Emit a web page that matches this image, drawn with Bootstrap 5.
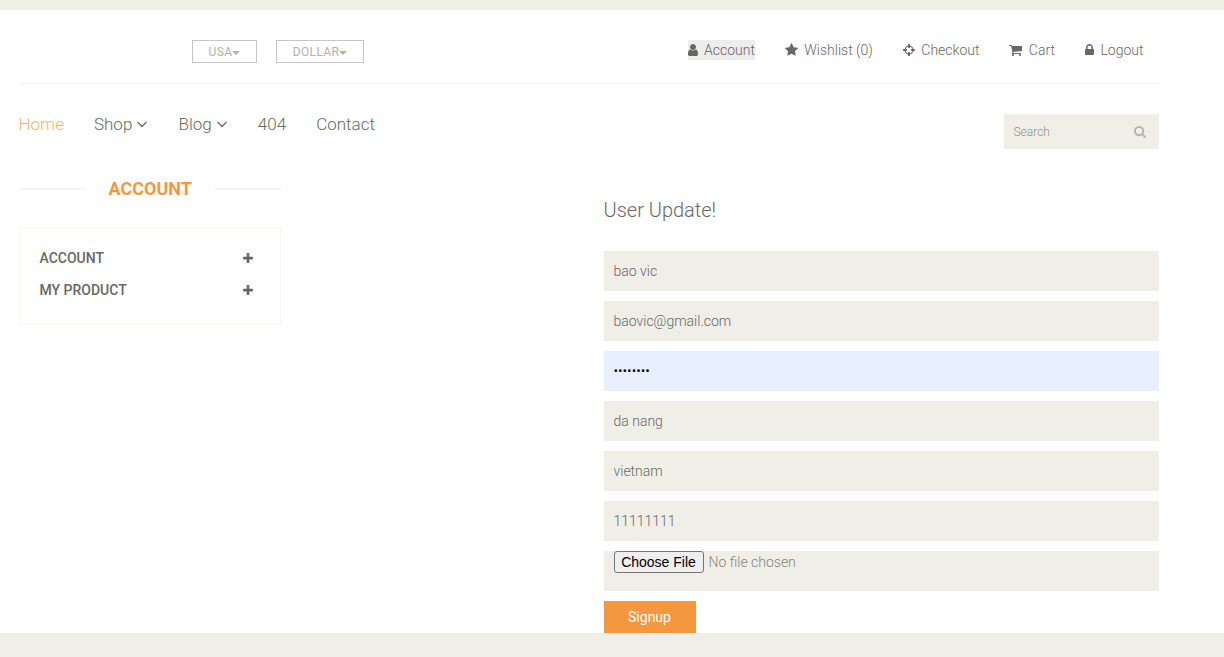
<!DOCTYPE html>
<html lang="en">
<head>
<meta charset="utf-8">
<meta name="viewport" content="width=device-width, initial-scale=1">
<title>User Update</title>
<link href="https://cdn.jsdelivr.net/npm/bootstrap@5.3.0/dist/css/bootstrap.min.css" rel="stylesheet">
<style>
  body { font-family: Roboto, "Liberation Sans", sans-serif; font-weight: 300; font-size: 14px; line-height: 20px; color: #696763; background: #fff; overflow: hidden; }
  a { color: inherit; text-decoration: none; }
  svg { fill: currentColor; height: 14px; display: inline-block; vertical-align: -2px; }
  .strip { background: #efefe8; height: 10px; }
  .footer-strip { background: #efefe8; height: 24px; }
  .page-box { width: 1170px; margin-left: 3.5px; padding: 0 15px; }
  .page-box .row { --bs-gutter-x: 30px; }
  .top-row { height: 74px; padding: 30px 16px 0 173.5px; border-bottom: 1px solid #f5f5f5; margin-right: -1px; }
  .pick { border: 1px solid #c6c6c6; border-radius: 0; color: #b4b1ab; font-size: 12px; font-weight: 400; letter-spacing: .35px; line-height: 22px; height: 23px; padding: 0; }
  .pick.dropdown-toggle::after { border-width: 4px 4px 0; margin-left: 0; vertical-align: 1px; }
  .tools { gap: 30px; }
  .tools svg { margin-right: 3px; }
  .tools .current { background: #ededed; }
  .main-row { height: 95px; padding-top: 30px; }
  .menu { gap: 30px; font-size: 17px; height: 20px; }
  .menu .current { color: #f5b562; }
  .menu svg { height: 18px; vertical-align: -3px; }
  .search { width: 155px; height: 35px; background: #efefe8; color: #8f8f89; font-size: 12px; padding: 0 13px 0 10px; }
  .search svg { height: 12px; color: #b2b2ae; }
  .side-title { font-size: 18px; font-weight: 700; color: #f4983f; line-height: 20px; }
  .side-title::before, .side-title::after { content: ""; height: 2px; background: #f5f5f3; width: 67px; }
  .side-title::after { width: 66px; }
  .side-box { border: 1px solid #f7f7f0; height: 96px; margin-top: 29px; padding: 19px 27px 0 20px; font-weight: 500; }
  .side-box a { height: 32px; }
  .side-box svg { height: 13px; margin-top: 4px; }
  .form-title { font-size: 20px; font-weight: 300; line-height: 22px; margin: 20px 0 30px; }
  .field { border: 0; border-radius: 0; background: #efefe8; color: #696763; font-size: 14px; font-weight: 300; height: 40px; padding: 0 10px; margin-bottom: 10px; }
  .field.filled { background: #e8effd; color: #000; }
  .picker { display: flex; align-items: flex-start; color: #85847f; line-height: 22px; }
  .choose { font: 14px/20px "Liberation Sans", sans-serif; color: #000; background: #efefef; border: 1px solid #767676; border-radius: 3px; width: 90px; height: 22px; padding: 0; margin-right: 5px; }
  .signup { background: #f4983f; color: #fff; border: 0; border-radius: 0; width: 92px; height: 32px; padding: 0; font-size: 14px; font-weight: 400; line-height: 32px; display: block; }
</style>
</head>
<body>
<svg class="d-none" aria-hidden="true">
  <symbol id="angle" viewBox="320 0 1152 1792"><path d="M1395 736q0 13-10 23l-466 466q-10 10-23 10t-23-10l-466-466q-10-10-10-23t10-23l50-50q10-10 23-10t23 10l393 393 393-393q10-10 23-10t23 10l50 50q10 10 10 23z"/></symbol>
  <symbol id="plus" viewBox="192 0 1408 1792"><path d="M1600 736v192q0 40-28 68t-68 28h-416v416q0 40-28 68t-68 28h-192q-40 0-68-28t-28-68v-416h-416q-40 0-68-28t-28-68v-192q0-40 28-68t68-28h416v-416q0-40 28-68t68-28h192q40 0 68 28t28 68v416h416q40 0 68 28t28 68z"/></symbol>
</svg>
<div class="strip"></div>
<header class="page-box">
  <div class="top-row d-flex justify-content-between align-items-start">
    <div class="d-flex">
      <button class="btn pick dropdown-toggle" style="width:65px;margin-right:19px">USA</button>
      <button class="btn pick dropdown-toggle" style="width:88px">DOLLAR</button>
    </div>
    <nav class="tools d-flex">
      <a class="current" href="#"><svg width="10" viewBox="256 0 1280 1792"><path d="M1536 1399q0 109-62.5 187t-150.5 78h-854q-88 0-150.5-78t-62.5-187q0-85 8.5-160.5t31.5-152 58.5-131 94-89 134.5-34.5q131 128 313 128t313-128q76 0 134.5 34.5t94 89 58.5 131 31.5 152 8.5 160.5zm-256-887q0 159-112.5 271.5t-271.5 112.5-271.5-112.5-112.5-271.5 112.5-271.5 271.5-112.5 271.5 112.5 112.5 271.5z"/></svg> Account</a>
      <a href="#"><svg width="13" viewBox="64 0 1664 1792"><path d="M1728 647q0 22-26 48l-363 354 86 500q1 7 1 20 0 21-10.5 35.5t-30.5 14.5q-19 0-40-12l-449-236-449 236q-22 12-40 12-21 0-31.5-14.5t-10.5-35.5q0-6 2-20l86-500-364-354q-25-27-25-48 0-37 56-46l502-73 225-455q19-41 49-41t49 41l225 455 502 73q56 9 56 46z"/></svg> Wishlist (0)</a>
      <a href="#"><svg width="12" viewBox="128 0 1536 1792"><path d="M1325 1024h-109q-26 0-45-19t-19-45v-128q0-26 19-45t45-19h109q-32-108-112.5-188.5t-188.5-112.5v109q0 26-19 45t-45 19h-128q-26 0-45-19t-19-45v-109q-108 32-188.5 112.5t-112.5 188.5h109q26 0 45 19t19 45v128q0 26-19 45t-45 19h-109q32 108 112.5 188.5t188.5 112.5v-109q0-26 19-45t45-19h128q26 0 45 19t19 45v109q108-32 188.5-112.5t112.5-188.5zm339-192v128q0 26-19 45t-45 19h-143q-37 161-154.5 278.5t-278.5 154.5v143q0 26-19 45t-45 19h-128q-26 0-45-19t-19-45v-143q-161-37-278.5-154.5t-154.5-278.5h-143q-26 0-45-19t-19-45v-128q0-26 19-45t45-19h143q37-161 154.5-278.5t278.5-154.5v-143q0-26 19-45t45-19h128q26 0 45 19t19 45v143q161 37 278.5 154.5t154.5 278.5h143q26 0 45 19t19 45z"/></svg> Checkout</a>
      <a href="#"><svg width="13" viewBox="64 0 1664 1792"><path d="M704 1536q0 52-38 90t-90 38-90-38-38-90 38-90 90-38 90 38 38 90zm896 0q0 52-38 90t-90 38-90-38-38-90 38-90 90-38 90 38 38 90zm128-1088v512q0 24-16.5 42.5t-40.5 21.5l-1044 122q13 60 13 70 0 16-24 64h920q26 0 45 19t19 45-19 45-45 19h-1024q-26 0-45-19t-19-45q0-11 8-31.5t16-36 21.5-40 15.5-29.5l-177-823h-204q-26 0-45-19t-19-45 19-45 45-19h256q16 0 28.5 6.5t19.5 15.5 13 24.5 8 26 5.5 29.5 4.5 26h1201q26 0 45 19t19 45z"/></svg> Cart</a>
      <a href="#"><svg width="9" viewBox="320 0 1152 1792"><path d="M640 768h512v-192q0-106-75-181t-181-75-181 75-75 181v192zm832 96v576q0 40-28 68t-68 28h-960q-40 0-68-28t-28-68v-576q0-40 28-68t68-28h32v-192q0-184 132-316t316-132 316 132 132 316v192h32q40 0 68 28t28 68z"/></svg> Logout</a>
    </nav>
  </div>
  <div class="main-row d-flex justify-content-between align-items-start">
    <nav class="menu d-flex">
      <a class="current" href="#">Home</a>
      <a href="#">Shop <svg width="12"><use href="#angle"/></svg></a>
      <a href="#">Blog <svg width="12"><use href="#angle"/></svg></a>
      <a href="#">404</a>
      <a href="#">Contact</a>
    </nav>
    <div class="search d-flex align-items-center justify-content-between">
      <span>Search</span>
      <svg width="12" viewBox="64 128 1664 1664"><path d="M1216 832q0-185-131.5-316.5t-316.5-131.5-316.5 131.5-131.5 316.5 131.5 316.5 316.5 131.5 316.5-131.5 131.5-316.5zm512 832q0 52-38 90t-90 38q-54 0-90-38l-343-342q-179 124-399 124-143 0-273.5-55.5t-225-150-150-225-55.5-273.5 55.5-273.5 150-225 225-150 273.5-55.5 273.5 55.5 225 150 150 225 55.5 273.5q0 220-124 399l343 343q37 37 37 90z"/></svg>
    </div>
  </div>
</header>
<main class="page-box">
  <div class="row">
    <aside class="col-3">
      <h2 class="side-title d-flex align-items-center justify-content-between mb-0">ACCOUNT</h2>
      <div class="side-box">
        <a class="d-flex justify-content-between" href="#">ACCOUNT <svg width="10"><use href="#plus"/></svg></a>
        <a class="d-flex justify-content-between" href="#">MY PRODUCT <svg width="10"><use href="#plus"/></svg></a>
      </div>
    </aside>
    <section class="col-6 ms-auto">
      <h2 class="form-title">User Update!</h2>
      <form>
        <input class="form-control field" type="text" value="bao vic">
        <input class="form-control field" type="email" value="baovic@gmail.com">
        <input class="form-control field filled" type="password" value="12345678">
        <input class="form-control field" type="text" value="da nang">
        <input class="form-control field" type="text" value="vietnam">
        <input class="form-control field" type="text" value="11111111">
        <div class="field picker"><button class="choose" type="button">Choose File</button><span>No file chosen</span></div>
        <button class="btn signup" type="button">Signup</button>
      </form>
    </section>
  </div>
</main>
<div class="footer-strip"></div>
<script src="https://cdn.jsdelivr.net/npm/bootstrap@5.3.0/dist/js/bootstrap.bundle.min.js"></script>
</body>
</html>
